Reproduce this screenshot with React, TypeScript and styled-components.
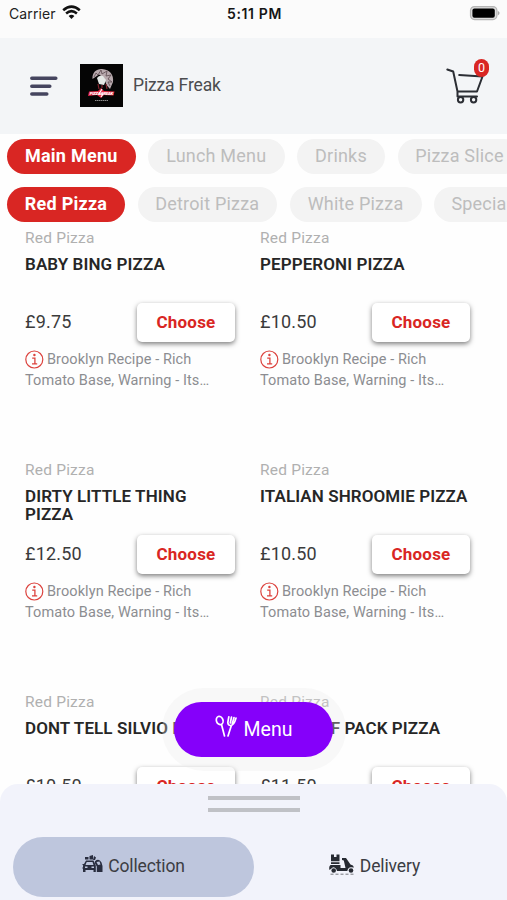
import React from "react";
import styled, { createGlobalStyle } from "styled-components";

const Global = createGlobalStyle`
  * { box-sizing: border-box; }
  body { margin: 0; background: #fff; font-family: Roboto, "Liberation Sans", sans-serif; }
  button { font-family: inherit; border: 0; padding: 0; margin: 0; }
  svg { display: block; flex: none; }
`;

const Screen = styled.div`
  position: relative;
  width: 507px;
  height: 900px;
  overflow: hidden;
  display: flex;
  flex-direction: column;
  background: #fefefe;
`;
const StatusBar = styled.div`
  height: 38px;
  flex: none;
  display: grid;
  grid-template-columns: 1fr auto 1fr;
  align-items: start;
  padding: 4px 7px 0 9px;
  background: #fbfbfb;
  font: 400 14px/19px Inter, sans-serif;
  color: #222;
`;
const Carrier = styled.div`
  display: flex;
  gap: 6px;
  letter-spacing: 0.1px;
`;
const Clock = styled.div`
  font-weight: 600;
  font-size: 14px;
  color: #151515;
  letter-spacing: 0.65px;
`;
const Battery = styled.div`
  justify-self: end;
  padding-top: 1px;
`;
const Header = styled.header`
  height: 96px;
  flex: none;
  display: flex;
  align-items: center;
  padding: 0 18px 0 30px;
  background: #f3f5f7;
`;
const Logo = styled.div`
  margin: 0 0 2px 22px;
  width: 43px;
  height: 43px;
`;
const Brand = styled.div`
  margin: 0 0 2px 10px;
  flex: 1;
  font-size: 17.5px;
  line-height: 24px;
  letter-spacing: -0.15px;
  color: #4b4c4f;
`;
const Cart = styled.div`
  position: relative;
  width: 43px;
  height: 48px;
  margin-bottom: 2px;
`;
const Badge = styled.span`
  position: absolute;
  right: 0;
  top: -2px;
  width: 15px;
  height: 18px;
  border-radius: 8px;
  background: #d92623;
  color: #fff;
  font-size: 12.5px;
  line-height: 18px;
  text-align: center;
`;
const Tabs = styled.nav<{ $top: number }>`
  display: flex;
  flex: none;
  gap: 12.5px;
  padding-left: 7px;
  margin-top: ${(p) => p.$top}px;
  overflow: hidden;
`;
const Pill = styled.button<{ $w: number; $active?: boolean }>`
  flex: none;
  width: ${(p) => p.$w}px;
  height: 35px;
  border-radius: 18px;
  background: ${(p) => (p.$active ? "#d92623" : "#f3f3f3")};
  color: ${(p) => (p.$active ? "#fff" : "#bdbdbd")};
  font-size: 18px;
  font-weight: ${(p) => (p.$active ? 700 : 400)};
  line-height: 33px;
  padding-bottom: 2px;
  letter-spacing: ${(p) => (p.$active ? 0.25 : 0.2)}px;
  white-space: nowrap;
`;
const List = styled.main`
  display: grid;
  grid-template-columns: 210px 210px;
  column-gap: 25px;
  grid-auto-rows: 232px;
  padding: 6px 0 0 25px;
  flex: 1;
  min-height: 0;
  overflow: hidden;
`;
const Card = styled.article`
  min-width: 0;
`;
const Category = styled.div`
  font-size: 15.5px;
  line-height: 20px;
  color: #b0b0b0;
  letter-spacing: 0.2px;
`;
const Name = styled.h3`
  margin: 7px 0 0;
  height: 46px;
  font-size: 17px;
  font-weight: 600;
  line-height: 18.5px;
  letter-spacing: 0.09px;
  color: #262626;
  white-space: pre-line;
`;
const BuyRow = styled.div`
  display: flex;
  justify-content: space-between;
  align-items: center;
  height: 40px;
  margin-top: 2px;
`;
const Price = styled.div`
  padding-bottom: 2px;
  font-size: 18px;
  color: #3b3b3b;
  letter-spacing: 0.2px;
`;
const Choose = styled.button`
  width: 98px;
  height: 39px;
  padding-bottom: 2px;
  border-radius: 5px;
  background: #fff;
  color: #d92623;
  font-size: 17px;
  font-weight: 700;
  letter-spacing: 0.2px;
  box-shadow: 0 2px 5px rgba(0, 0, 0, 0.5);
`;
const Info = styled.div`
  margin-top: 6px;
  font-size: 14.5px;
  line-height: 21px;
  color: #8c8d91;
  letter-spacing: 0.08px;
`;
const InfoLine = styled.div`
  display: flex;
  align-items: center;
  gap: 3px;
  white-space: nowrap;
`;
const MenuHalo = styled.div`
  position: absolute;
  left: 162px;
  top: 688px;
  width: 184px;
  height: 83px;
  border-radius: 42px;
  padding: 14px 12px;
  background: rgba(235, 235, 235, 0.3);
`;
const MenuButton = styled.button`
  display: flex;
  align-items: center;
  justify-content: center;
  gap: 7px;
  width: 159px;
  height: 55px;
  padding-bottom: 1px;
  border-radius: 28px;
  background: #8500fa;
  color: #fff;
  font-size: 19.5px;
  letter-spacing: 0;
`;
const MenuGlyph = styled.span`
  padding-bottom: 6px;
`;
const Sheet = styled.footer`
  position: relative;
  flex: none;
  height: 116px;
  border-radius: 18px 18px 0 0;
  background: #f2f3fb;
`;
const Handle = styled.div`
  width: 92px;
  height: 16px;
  margin: 12px 0 0 208px;
  border: solid #c0c1c6;
  border-width: 4px 0;
`;
const Modes = styled.div`
  display: grid;
  grid-template-columns: 241px 241px;
  margin: 25px 0 0 13px;
`;
const Mode = styled.button<{ $active?: boolean }>`
  height: 60px;
  padding-bottom: 2px;
  border-radius: 30px;
  display: flex;
  align-items: center;
  justify-content: center;
  gap: 5px;
  font-size: 17.5px;
  letter-spacing: -0.12px;
  color: #3c3d43;
  background: ${(p) => (p.$active ? "#bec6dd" : "transparent")};
`;
const ModeGlyph = styled.span`
  padding-bottom: 4px;
`;

const WifiIcon = () => (
  <svg width="19" height="15" viewBox="0 0 19 15" fill="none" stroke="#111" strokeWidth="2.6">
    <path d="M1.2 6.2Q9.5-.9 17.8 6.2M4.1 9.4Q9.5 4.9 14.9 9.4" />
    <path d="M9.500 15L6.600 11.900Q9.500 9.600 12.400 11.900Z" fill="#111" stroke="none" />
  </svg>
);
const BatteryIcon = () => (
  <svg width="31" height="16" viewBox="0 0 31 16">
    <rect x="1.5" y="1.6" width="26.4" height="13" rx="4" fill="#ddd" stroke="#b5b5b5" strokeWidth="1.2" />
    <rect x="3.4" y="3.6" width="22.4" height="9.2" rx="2" fill="#000" />
    <path d="M28.8 5.7Q32.500 8 28.8 10.4Z" fill="#aaa" />
  </svg>
);
const BurgerIcon = () => (
  <svg width="28" height="22" viewBox="0 0 28 22" stroke="#45455f" strokeWidth="3.5" strokeLinecap="round">
    <path d="M1.8 3.2H25.8M1.8 11.2H19.8M1.8 19H16.8" />
  </svg>
);
const LogoArt = () => (
  <svg width="43" height="43" viewBox="0 0 43 43">
    <rect width="43" height="43" fill="#050505" />
    <path d="M12.5 15C12 8 17 4.5 22 5C30 5.500 34 11 33 18L30 25L26.500 21L24 14L19 10.500Z" fill="#b7a9ad" />
    <path d="M14 13L16 9L18 11L21 6L22 10L27 7L26 12L31 11L28 15L32 18L28 18L30 22" fill="none" stroke="#5d4b50" strokeWidth=".8" />
    <path d="M17 14Q19 11 23 12L26 16L24 21L19 20Z" fill="#e4e8e5" />
    <path d="M18 20L19 25M22 21L22 24M26 20L27 25" stroke="#87252f" strokeWidth="1.2" />
    <path d="M9 27.500L18 27L21 24L24 27L34.500 27.500L33.500 31.500L24 31L21 34L17 31L8 32Z" fill="#e32743" />
    <text x="9.700" y="31" fontFamily="Roboto, sans-serif" fontSize="4.200" fontWeight="900" fontStyle="italic" fill="#fff" textLength="23.500">PIZZA FREAK</text>
    <path d="M22 25L19 30H23L21 33" fill="none" stroke="#fff" strokeWidth="1.100" />
    <path d="M15 36.500H28" stroke="#8b8b8b" strokeWidth="1" strokeDasharray="1.500 .5" />
  </svg>
);
const CartIcon = () => (
  <svg width="43" height="48" viewBox="0 0 43 48" fill="none" stroke="#2b2e34" strokeWidth="2" strokeLinecap="round" strokeLinejoin="round">
    <path d="M1.300 8.500L7.200 10.500L11.500 30.500H31L36.500 15.500L13.200 14M11.500 30.500V35.500H31" />
    <circle cx="14.600" cy="38.800" r="2.700" />
    <circle cx="27.600" cy="38.800" r="2.700" />
  </svg>
);
const InfoIcon = () => (
  <svg width="19" height="19" viewBox="0 0 19 19" fill="none" stroke="#dc423d">
    <circle cx="9.300" cy="9.500" r="8.500" strokeWidth="1.200" />
    <circle cx="9.400" cy="5" r="1.200" fill="#dc423d" stroke="none" />
    <path d="M7.200 8.200H9.900V13.600M7 13.900H12.200" strokeWidth="1.300" />
  </svg>
);
const CutleryIcon = () => (
  <svg width="22" height="23" viewBox="0 0 22 23" fill="none" stroke="#fff" strokeWidth="1.700" strokeLinecap="round" strokeLinejoin="round">
    <ellipse cx="4.700" cy="5.500" rx="3.300" ry="4.200" transform="rotate(-20 4.700 5.500)" />
    <path d="M6.500 9.500L9.500 21M13 21L16.200 11M13.800 1.800L12.800 7.500Q13 10.500 15.500 10.500Q19 10.500 21 3M16.500 2L15.300 8M19 2.500L17.300 8.500" />
  </svg>
);
const CollectionIcon = () => (
  <svg width="21" height="20" viewBox="0 0 21 20" fill="#292d3f">
    <path d="M3 3H6.500V5.500H3ZM7.500 2L11 1V5.500H7.500ZM12 2L14 3.500L13 6H11Z" />
    <path d="M4 6.500H11.500L13.800 11.500V18H11.500V16H3.500V18H1V11.500L2 10ZM4.700 8L3.500 11H11.500L10.500 8Z" fillRule="evenodd" />
    <path d="M3 12.500H5.500V14H3ZM9.500 12.500H12V14H9.500Z" fill="#bec6dd" />
    <path d="M0 10.500H3M13 7.200Q17 4 19.500 8.500L20.500 12V18H14.800V12.500L12.800 9Z" />
    <path d="M14.500 8L17.500 7.500L18.500 10.500L16 11Z" fill="#bec6dd" />
    <path d="M.5 10.500H3M.3 14H2" stroke="#292d3f" />
  </svg>
);
const DeliveryIcon = () => (
  <svg width="26" height="21" viewBox="0 0 26 21" fill="#272a32">
    <path d="M2 .5H5V3H7.500V.5H10.500V7.300H2ZM2 8.300H10.500V10H2ZM1.500 11H11.500V14H16.500L14.800 6.500L13 6V4H17L21.500 10.500Q24.500 11 25 13.500L22 13.300Q19 13.500 18.300 17H8Q7 13.300 4 13.300L.5 16Q-.5 12.500 1.500 11Z" />
    <circle cx="4.700" cy="16.500" r="2.300" />
    <circle cx="22" cy="16.500" r="2.300" />
    <path d="M1.500 20.200H25" stroke="#77797f" strokeDasharray="3 2" />
  </svg>
);

const menus: [string, number][] = [["Main Menu", 128.5], ["Lunch Menu", 136.5], ["Drinks", 88], ["Pizza Slice", 124]];
const sections: [string, number][] = [["Red Pizza", 118], ["Detroit Pizza", 139.5], ["White Pizza", 132], ["Specials", 104]];
const items = [
  { name: "BABY BING PIZZA", price: "£9.75" },
  { name: "PEPPERONI PIZZA", price: "£10.50" },
  { name: "DIRTY LITTLE THING\nPIZZA", price: "£12.50" },
  { name: "ITALIAN SHROOMIE PIZZA", price: "£10.50" },
  { name: "DONT TELL SILVIO PIZZA", price: "£10.50" },
  { name: "OTHER OF PACK PIZZA", price: "£11.50" },
];

export default function App() {
  return (
    <>
      <Global />
      <Screen>
        <StatusBar>
          <Carrier>Carrier <WifiIcon /></Carrier>
          <Clock>5:11 PM</Clock>
          <Battery><BatteryIcon /></Battery>
        </StatusBar>
        <Header>
          <BurgerIcon />
          <Logo><LogoArt /></Logo>
          <Brand>Pizza Freak</Brand>
          <Cart><CartIcon /><Badge>0</Badge></Cart>
        </Header>
        <Tabs $top={5}>
          {menus.map(([label, w], i) => <Pill key={label} $w={w} $active={i === 0}>{label}</Pill>)}
        </Tabs>
        <Tabs $top={12.5}>
          {sections.map(([label, w], i) => <Pill key={label} $w={w} $active={i === 0}>{label}</Pill>)}
        </Tabs>
        <List>
          {items.map((item) => (
            <Card key={item.name}>
              <Category>Red Pizza</Category>
              <Name>{item.name}</Name>
              <BuyRow>
                <Price>{item.price}</Price>
                <Choose>Choose</Choose>
              </BuyRow>
              <Info>
                <InfoLine><InfoIcon />Brooklyn Recipe - Rich</InfoLine>
                <InfoLine>Tomato Base, Warning - Its…</InfoLine>
              </Info>
            </Card>
          ))}
        </List>
        <Sheet>
          <Handle />
          <Modes>
            <Mode $active><ModeGlyph><CollectionIcon /></ModeGlyph>Collection</Mode>
            <Mode><ModeGlyph><DeliveryIcon /></ModeGlyph>Delivery</Mode>
          </Modes>
        </Sheet>
        <MenuHalo>
          <MenuButton><MenuGlyph><CutleryIcon /></MenuGlyph>Menu</MenuButton>
        </MenuHalo>
      </Screen>
    </>
  );
}
